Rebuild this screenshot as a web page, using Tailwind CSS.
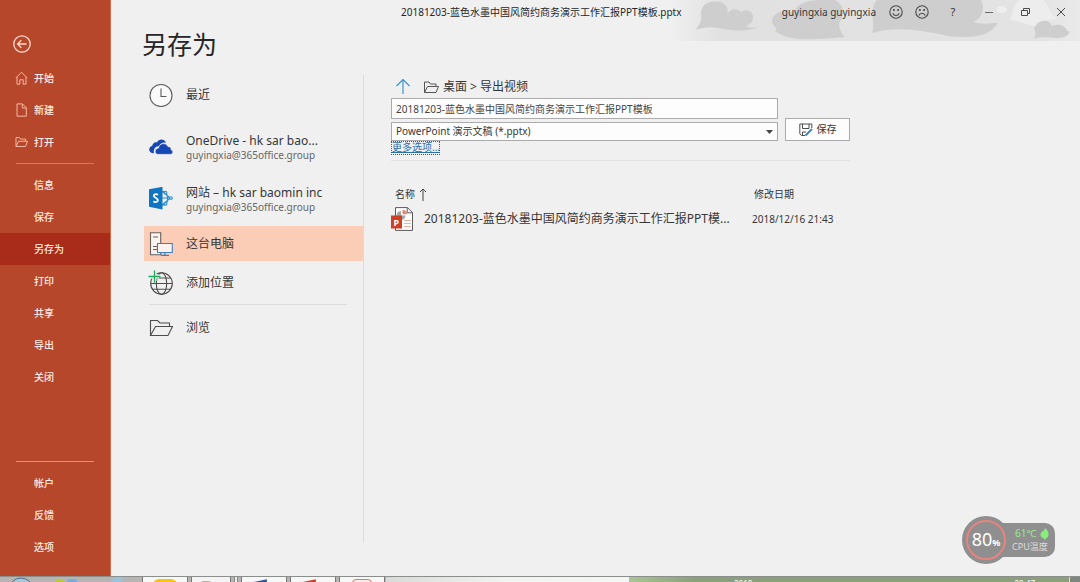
<!DOCTYPE html>
<html lang="zh-CN">
<head>
    <meta charset="UTF-8">
    <meta name="viewport" content="width=device-width, initial-scale=1.0">
    <title>另存为</title>
    <script src="https://cdn.jsdelivr.net/npm/@tailwindcss/browser@4"></script>
</head>
<body class="relative flex min-h-screen flex-col overflow-hidden bg-[#f0f0f0] font-['Noto_Sans','Noto_Sans_CJK_SC',sans-serif] text-[12px] text-[#363636]">

    <div class="flex flex-1">
        <!-- Sidebar -->
        <nav class="flex w-[111px] shrink-0 flex-col border-r border-[#d4694c] bg-[#b7472a] pb-[13px] text-[10px] font-medium text-[#ffece5]">
            <button class="mt-[34px] mb-2 ml-3 h-5 w-5" aria-label="返回">
                <svg viewBox="0 0 20 20" fill="none" stroke="#ffd9cb" stroke-width="1.3"><circle cx="10" cy="10" r="8.2"/><path d="M14.5 10H6M9.3 6.3L5.6 10l3.7 3.7"/></svg>
            </button>
            <a href="#" class="flex h-8 items-center gap-[6px] pl-[15px]">
                <svg class="h-[14px] w-[13px]" viewBox="0 0 13 14" fill="none" stroke="#f3b7a4"><path d="M.8 7L6.5 1.2 12.2 7M2 6v7.2h2.8V8.8h3.4v4.4H11V6"/></svg>
                开始
            </a>
            <a href="#" class="flex h-8 items-center gap-[6px] pl-[15px]">
                <svg class="h-[14px] w-[13px]" viewBox="0 0 13 14" fill="none" stroke="#f3b7a4"><path d="M2 .9h5.5l3.8 3.8v8.5H2zM7.3 1v4h4"/></svg>
                新建
            </a>
            <a href="#" class="flex h-8 items-center gap-[6px] pl-[15px]">
                <svg class="h-[14px] w-[13px]" viewBox="0 0 13 14" fill="none" stroke="#f3b7a4"><path d="M1 11.5v-9h3.4l1.2 1.6h5v2.2M1 11.5l2.5-5.2h9l-2 5.2z"/></svg>
                打开
            </a>
            <hr class="mx-4 mt-[5px] mb-[5px] border-[#d9775c]">
            <a href="#" class="flex h-8 items-center pl-[34px]">信息</a>
            <a href="#" class="flex h-8 items-center pl-[34px]">保存</a>
            <a href="#" class="flex h-8 items-center bg-[#a92b1a] pl-[34px]">另存为</a>
            <a href="#" class="flex h-8 items-center pl-[34px]">打印</a>
            <a href="#" class="flex h-8 items-center pl-[34px]">共享</a>
            <a href="#" class="flex h-8 items-center pl-[34px]">导出</a>
            <a href="#" class="flex h-8 items-center pl-[34px]">关闭</a>
            <hr class="mx-4 mt-auto mb-[5px] border-[#e08f78]">
            <a href="#" class="flex h-8 items-center pl-[34px]">帐户</a>
            <a href="#" class="flex h-8 items-center pl-[34px]">反馈</a>
            <a href="#" class="flex h-8 items-center pl-[34px]">选项</a>
        </nav>

        <div class="flex min-w-0 flex-1 flex-col">
            <!-- Title bar -->
            <header class="relative flex h-6 items-center pr-px">
                <svg class="absolute top-0 right-0 h-[41px] w-[410px]" viewBox="0 0 410 41">
                    <defs>
                        <linearGradient id="fade"><stop offset="0" stop-color="#e1e1e1" stop-opacity="0"/><stop offset=".12" stop-color="#e1e1e1"/><stop offset=".9" stop-color="#e3e3e3"/><stop offset="1" stop-color="#eaeaea"/></linearGradient>
                    </defs>
                    <path fill="url(#fade)" d="M0 0h410v41H0z"/>
                    <g fill="#cecece">
                        <path d="M31 12C32 4 40 0 50 2c7 2 9 8 7 12 4-6 10-6 14-2 5-4 12-1 12 5 0 5-3 8-7 9 4 2 9 2 13 0-8 6-26 5-36 3-8-2-17-3-28 1 5-5 7-9 6-18z"/>
                        <path d="M102 20C104 12 114 9 124 13 127 3 138 0 150 0h15c9 5 11 14 4 23 0 6 2 10 6 14-24 2-55 6-70-6 5-2-4-5-3-11z"/>
                        <path d="M207 0h104c4 8 2 18-8 22 10 3 18 1 25 1-8 13-24 16-50 13-28-6-50-10-76-3 4-10-4-22 5-33z"/>
                        <path d="M364 28c1-8 14-11 18-2 7-3 14 0 15 5 5-1 1 5-3 6-10 3-22-2-30 2 2-4 2-7 0-11z"/>
                    </g>
                    <path fill="#ededed" d="M340 20c3-6 2-13 9-20h24c6 5 6 14 14 18-8 4-18 0-22 9-8-3-16-6-25-7zM326 9c2-4 9-4 11 0 2 4-9 7-11 0z"/>
                </svg>
                <div class="relative pl-[290px] text-[10px] whitespace-nowrap text-[#262626]">20181203-蓝色水墨中国风简约商务演示工作汇报PPT模板.pptx</div>
                <div class="relative ml-auto flex items-center">
                    <span class="mr-[7px] text-[10px] whitespace-nowrap">guyingxia guyingxia</span>
                    <button class="flex h-6 w-[26px] items-center justify-center" aria-label="笑脸">
                        <svg class="h-[14px] w-[14px]" viewBox="0 0 14 14" fill="none" stroke="#4a4a4a" stroke-width="1.1"><circle cx="7" cy="7" r="6.2"/><path d="M3.8 8.3c1.2 3 5.2 3 6.4 0"/><circle cx="4.9" cy="5" r=".5"/><circle cx="9.1" cy="5" r=".5"/></svg>
                    </button>
                    <button class="flex h-6 w-[26px] items-center justify-center" aria-label="哭脸">
                        <svg class="h-[14px] w-[14px]" viewBox="0 0 14 14" fill="none" stroke="#4a4a4a" stroke-width="1.1"><circle cx="7" cy="7" r="6.2"/><path d="M3.8 10.5c1.2-3 5.2-3 6.4 0"/><circle cx="4.9" cy="5" r=".5"/><circle cx="9.1" cy="5" r=".5"/></svg>
                    </button>
                    <button class="h-6 w-9 text-[11px]" aria-label="帮助">?</button>
                    <button class="flex h-6 w-9 items-center justify-center" aria-label="最小化">
                        <svg class="h-[10px] w-[10px]" viewBox="0 0 10 10" stroke="#6a6a6a"><path d="M1 5.5h8"/></svg>
                    </button>
                    <button class="flex h-6 w-9 items-center justify-center" aria-label="还原">
                        <svg class="h-[10px] w-[10px]" viewBox="0 0 10 10" fill="none" stroke="#4a4a4a"><path d="M1.500 3.500h6v5h-6zM3.500 3.500v-2h6v5h-2"/></svg>
                    </button>
                    <button class="flex h-6 w-9 items-center justify-center" aria-label="关闭">
                        <svg class="h-[10px] w-[10px]" viewBox="0 0 10 10" stroke="#4a4a4a"><path d="M1 1l8 8M9 1L1 9"/></svg>
                    </button>
                </div>
            </header>

            <h1 class="relative pl-[31px] text-[25px] leading-10 text-[#262626]">另存为</h1>

            <div class="mt-[11px] mb-[34px] flex flex-1">
                <!-- Places -->
                <div class="ml-[33px] w-[220px] shrink-0 border-r border-[#dcdcdc]">
                    <a href="#" class="flex h-10 items-center gap-[13px] pl-[5px]">
                        <svg class="h-6 w-6" viewBox="0 0 24 24" fill="#fafafa" stroke="#5c5c5c" stroke-width="1.1"><circle cx="12" cy="12.500" r="11"/><path fill="none" d="M12 5.500v8h5.500"/></svg>
                        最近
                    </a>
                    <a href="#" class="mt-[6px] flex h-[52px] items-center gap-[13px] pl-[5px]">
                        <svg class="h-6 w-6" viewBox="0 1 24 24" fill="#1547b5"><path d="M5 19.300C1.500 19.200 0 17.600.2 15.300c.2-1.900 1.400-3 3-3.200C3.300 9.600 5.500 7.700 8.200 8.300 9.600 5.200 14.600 4 17.200 8.700c-3.900-.7-6.300 1.100-6.900 3.700C6.500 11.700 4 15.500 5 19.300z"/><path stroke="#f0f0f0" stroke-width=".8" d="M8.800 20.400c-3.600-.2-3.800-5.700.7-6.300.3-5 7.500-6.300 9.500-1.500 2.600 0 3.300 1.700 3.100 3.200 2.700.8 2.200 4.600-.7 4.600z"/></svg>
                        <span class="flex min-w-0 flex-col"><span class="leading-4 whitespace-nowrap">OneDrive - hk sar bao...</span><span class="text-[10px] leading-[13px] text-[#666]">guyingxia@365office.group</span></span>
                    </a>
                    <a href="#" class="flex h-[52px] items-center gap-[13px] pl-[5px]">
                        <svg class="h-6 w-6" viewBox="0 1 24 24" fill="none" stroke="#2b8fd0" stroke-width="1.100"><path d="M13 5.500l8.500 6.500-8.500 7M13 5.500c4-1 6 2.500 5.500 9M13 19c3 .5 5-1.500 5.500-4.500M13 12h8"/><circle cx="22" cy="12" r="1.300" fill="#f0f0f0"/><circle cx="16.500" cy="6.500" r="1.300" fill="#f0f0f0"/><circle cx="16.500" cy="17.800" r="1.300" fill="#f0f0f0"/><path fill="#0f74c2" stroke="none" d="M0 3.300L13.500.8v22.600L0 20.800z"/><path stroke="#fff" stroke-width="1.800" d="M9 8.800C6.500 7.500 4.500 8.600 4.800 10.200c.3 1.500 4.200 1.800 4.100 4-.1 2-2.600 2.300-4.500 1.200"/></svg>
                        <span class="flex min-w-0 flex-col"><span class="leading-4 whitespace-nowrap">网站 – hk sar baomin inc</span><span class="text-[10px] leading-[13px] text-[#666]">guyingxia@365office.group</span></span>
                    </a>
                    <a href="#" class="mt-px flex h-[35px] items-center gap-[13px] bg-[#fbcdb6] pl-[5px]">
                        <svg class="h-6 w-6" viewBox="0 0 24 24" fill="#fdf3ee" stroke="#66605e" stroke-width="1.100"><path d="M1.500.7h10.200v22H1.500z"/><path d="M4 5h5M4 14.500h4M4 17.500h4"/><path stroke="#3f7fc1" d="M8.500 11.500h14.800v9H8.500z"/><path stroke="#3f7fc1" d="M15.900 20.500v2.800M12 23.400h8"/></svg>
                        这台电脑
                    </a>
                    <a href="#" class="flex h-[43px] items-center gap-[13px] pl-[5px]">
                        <svg class="h-6 w-6 overflow-visible" viewBox="0 0 24 24" fill="none" stroke="#4d4d4d" stroke-width="1.100"><circle cx="12.500" cy="12.500" r="10.800"/><ellipse cx="12.500" cy="12.500" rx="5.200" ry="10.800"/><path d="M3.500 7h18M1.700 12.500h21.600M3.500 18.200h18"/><path stroke="#f0f0f0" stroke-width="4" d="M5.500 0v10M0 5.500h10"/><path stroke="#1fa95a" stroke-width="1.300" d="M5.500-.5v12M-.5 5.500h12"/></svg>
                        添加位置
                    </a>
                    <hr class="mr-4 ml-[5px] border-[#dcdcdc]">
                    <a href="#" class="flex h-[46px] items-center gap-[13px] pl-[5px]">
                        <svg class="h-6 w-6" viewBox="0 0 24 24" fill="none" stroke="#4d4d4d" stroke-width="1.100"><path d="M1.500 19.500V4.500H8.500l2.500 2.500h9.500v3.500M1.500 19.500l5-9h17l-4.500 9z"/></svg>
                        浏览
                    </a>
                </div>

                <!-- File panel -->
                <main class="mr-6 ml-[27px] max-w-[459px] flex-1">
                    <div class="flex h-[23px] items-center">
                        <button class="ml-1" aria-label="上一级">
                            <svg class="h-4 w-4" viewBox="0 0 16 16" fill="none" stroke="#3d96d2" stroke-width="1.200"><path d="M8 15V.500M1.500 7L8 .500 14.500 7"/></svg>
                        </button>
                        <svg class="ml-3 h-4 w-4" viewBox="0 0 16 16" fill="none" stroke="#555"><path d="M1.500 13.500V3H6l1.500 2H13v2.500M1.500 13.500l3-6h11l-2.500 6z"/></svg>
                        <span class="ml-1">桌面 &gt; 导出视频</span>
                    </div>
                    <form class="flex items-end gap-[7px]">
                        <div class="flex min-w-0 flex-1 flex-col gap-[3px]">
                            <input type="text" aria-label="文件名" value="20181203-蓝色水墨中国风简约商务演示工作汇报PPT模板" class="h-[21px] w-full border border-[#ababab] bg-[#fdfdfd] px-1 text-[10px] text-[#444]">
                            <div class="relative">
                                <select aria-label="文件类型" class="block h-[19px] w-full appearance-none border border-[#ababab] bg-[#fdfdfd] px-1 text-[10px] text-[#363636]">
                                    <option>PowerPoint 演示文稿 (*.pptx)</option>
                                </select>
                                <svg class="pointer-events-none absolute top-2 right-[5px] h-1 w-[7px]" viewBox="0 0 7 4" fill="#444"><path d="M0 0h7L3.500 4z"/></svg>
                            </div>
                        </div>
                        <button type="button" class="flex h-[23px] w-[65px] items-center justify-center gap-1 border border-[#ababab] bg-[#fdfdfd] text-[10px]">
                            <svg class="h-[14px] w-[14px]" viewBox="0 0 14 14" fill="none" stroke="#4d4d4d"><path d="M6 12.500H2.500L.8 10.800V1h12v4M3.500 1v4.500h6.500V1M3.500 12.500V9H7"/><path stroke="#3b86c6" stroke-width="2" d="M6.500 12.500L13 6"/></svg>
                            保存
                        </button>
                    </form>
                    <a href="#" class="block h-[14px] w-[49px] border border-dotted border-[#555] text-[10px] leading-[11px] whitespace-nowrap text-[#2f6fa8] underline">更多选项...</a>
                    <hr class="mt-[5px] border-[#e2e2e2]">
                    <table class="mt-[23px] w-full table-fixed text-left text-[10px]">
                        <thead>
                            <tr class="h-5">
                                <th class="pl-1 font-normal">
                                    <span class="flex items-center gap-1">名称
                                        <svg class="h-[13px] w-[8px]" viewBox="0 0 8 13" fill="none" stroke="#444"><path d="M4 13V1M1 4l3-3 3 3"/></svg>
                                    </span>
                                </th>
                                <th class="w-[98px] pl-[2px] font-normal">修改日期</th>
                            </tr>
                        </thead>
                        <tbody>
                            <tr class="h-[30px]">
                                <td>
                                    <a href="#" class="flex items-center gap-[9px] text-[12px]">
                                        <svg class="h-6 w-6" viewBox="0 0 24 24"><path fill="#fff" stroke="#5a5a5a" d="M4.500.6h12l5 5v17.800h-17z"/><path fill="none" stroke="#5a5a5a" d="M16.200.8v5h5.200"/><path fill="#a6a6a6" d="M10 4a4.500 4.500 0 1 0 4.500 4.500H10z"/><path fill="#e88770" d="M11.500 2.800a4.500 4.500 0 0 1 4.500 4.500h-4.500z"/><path stroke="#eeb1a3" d="M13 13.500h7M13 16.500h7M13 19.500h7"/><path fill="#cb4027" d="M0 8.500h11v13H0z"/><text x="2.500" y="18.500" font-size="9" font-weight="700" fill="#fff">P</text></svg>
                                        <span class="whitespace-nowrap">20181203-蓝色水墨中国风简约商务演示工作汇报PPT模...</span>
                                    </a>
                                </td>
                                <td>2018/12/16 21:43</td>
                            </tr>
                        </tbody>
                    </table>
                </main>
            </div>
        </div>
    </div>

    <!-- Taskbar, only its top edge shows -->
    <footer class="flex h-[6px] shrink-0 items-start gap-[3px] overflow-hidden border-t border-[#8b8f8b] bg-[#b7b4b3] text-[8px] text-white">
        <div class="flex w-[139px] shrink-0">
            <svg class="h-5 w-full" viewBox="0 0 139 20"><circle cx="21" cy="13" r="12" fill="#a9c6d8" stroke="#4f6f86"/><path fill="#b9cb2b" d="M56 3q4-2 8 0v17h-8z"/><path fill="#73aede" d="M67 3q5-2 10 0v17H67z"/><path fill="#9ac2dc" d="M110 5q6-7 14-4l-6 5z"/></svg>
        </div>
        <div class="flex h-5 w-[46px] shrink-0 justify-center border-x border-[#777] bg-[#f7f7f5] pt-[2px]"><span class="h-4 w-6 rounded-md bg-[#fbc30d]"></span></div>
        <div class="flex h-5 w-[40px] shrink-0 border-x border-[#777] bg-[#f4f4f4] pt-1 pl-2"><span class="h-4 w-3 rounded-sm bg-[#d9a878]"></span></div>
        <div class="h-5 w-1 shrink-0 border-x border-[#888] bg-[#eee]"></div>
        <div class="h-5 w-[46px] shrink-0 border-x border-[#777] bg-[#f7f7f7]"><svg class="h-5 w-full" viewBox="0 0 46 20"><path fill="#2b579a" d="M11 5l15-3v18H11z"/></svg></div>
        <div class="h-5 w-[46px] shrink-0 border-x border-[#777] bg-[#f7f7f7]"><svg class="h-5 w-full" viewBox="0 0 46 20"><path fill="#cb4027" d="M11 5l15-3v18H11z"/></svg></div>
        <div class="flex h-5 w-[46px] shrink-0 justify-center border-x border-[#777] bg-[#f7f7f7] pt-[2px]"><span class="h-4 w-[20px] rounded-t-sm border border-[#e8785c] bg-[#fdebe4]"></span></div>
        <div class="-ml-[2px] h-5 w-[243px] shrink-0 bg-linear-to-r from-[#dadada] via-[#f3f3f3] to-[#f5f5f5]"></div>
        <div class="-ml-[3px] flex h-5 flex-1 justify-between bg-linear-to-r from-[#a9c494] via-[#8b9f7d] via-15% to-[#8b9f7d] pt-[1px] pr-[34px] pl-[105px]"><span>2018</span><span>20:47</span></div>
        <div class="-ml-[3px] h-5 w-[11px] shrink-0 border-l border-[#ddd] bg-[#7f867d]"></div>
    </footer>

    <!-- Floating CPU widget -->
    <aside class="absolute right-[25px] bottom-[18px] flex items-center">
        <div class="z-10 flex h-[48px] w-[48px] items-center justify-center rounded-full bg-[#8f8f8f] p-1">
            <div class="flex h-full w-full items-baseline justify-center rounded-full border-2 border-[#e58480] leading-[34px] text-white"><span class="text-[18px]">80</span><span class="text-[9px] font-bold">%</span></div>
        </div>
        <div class="-ml-5 flex h-[34px] w-[65px] flex-col justify-center rounded-[10px] bg-[#8f8f8f] pl-[22px] text-[9px] leading-[13px] whitespace-nowrap">
            <span class="flex items-center gap-1 pl-[3px] text-[10px] text-[#9bea92]">61℃
                <svg class="h-[12px] w-[9px]" viewBox="0 0 9 12" fill="#85ee7c"><path d="M5 0c4 3 5 8 1 10.500L4.500 12 4 10.500C-1 9 0 5 2.500 3.500 4 2.500 5 1.500 5 0z"/></svg>
            </span>
            <span class="text-[#dedede]">CPU温度</span>
        </div>
    </aside>

</body>
</html>
